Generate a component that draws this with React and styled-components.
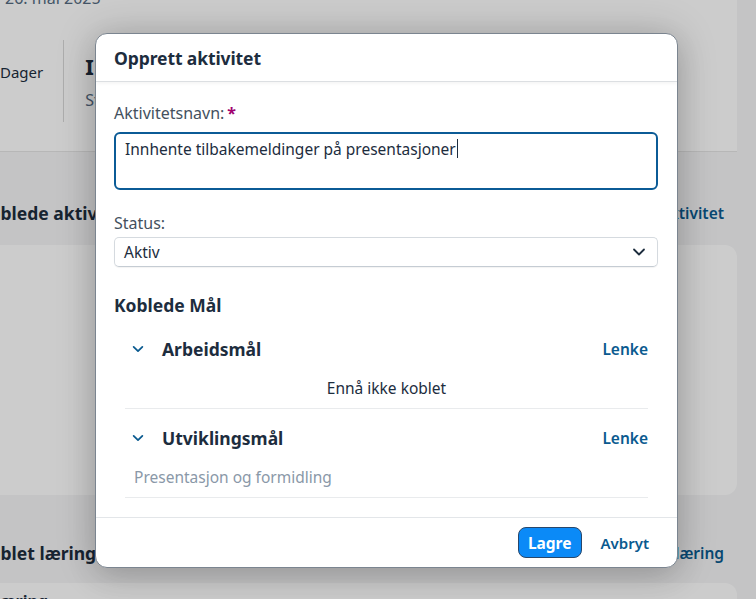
import React from "react";
import styled, { createGlobalStyle } from "styled-components";

const GlobalStyle = createGlobalStyle`
  html, body { margin: 0; padding: 0; }
  body {
    font-family: "Noto Sans", "Open Sans", Arial, sans-serif;
    background: #f5f6f7;
    overflow: hidden;
  }
  * { box-sizing: border-box; }
`;

const Viewport = styled.div`
  position: relative;
  width: 756px;
  height: 599px;
  overflow: hidden;
  background: #f5f6f7;
`;

const Page = styled.div`
  margin-left: -22px;
  width: 759px;
`;

const ObjectHeader = styled.header`
  display: flow-root;
  background: #ffffff;
  height: 152px;
  margin-left: -30px;
  padding: 0 0 0 52px;
  border-bottom: 1px solid #e5e5e5;
`;

const DateLine = styled.div`
  font-size: 16px;
  color: #556b81;
  line-height: 20px;
  margin-top: -12px;
  padding-left: 5px;
`;

const KpiRow = styled.div`
  display: flex;
  align-items: flex-start;
  margin-top: 32px;
`;

const KpiBlock = styled.div`
  display: flex;
  flex-direction: column;
  padding-top: ${(p) => p.$pt || 0}px;
`;

const KpiLabel = styled.span`
  font-size: 15px;
  line-height: 20px;
  color: #1d2d3e;
`;

const KpiValue = styled.span`
  font-size: 22px;
  font-weight: 700;
  color: #1d2d3e;
  line-height: 28px;
`;

const KpiSub = styled.span`
  font-size: 16px;
  line-height: 20px;
  color: #556b81;
  margin-top: 10px;
`;

const VSep = styled.div`
  width: 1px;
  height: 82px;
  background: #d9d9d9;
  margin: 0 21px 0 20px;
`;

const SectionHead = styled.div`
  display: flex;
  justify-content: space-between;
  align-items: center;
  height: 30px;
  margin-top: ${(p) => p.$mt}px;
  padding-right: 13px;
`;

const SectionTitle = styled.h3`
  margin: 0;
  font-size: 17.5px;
  font-weight: 700;
  color: #1d2d3e;
`;

const SectionLink = styled.a`
  font-size: 15.5px;
  font-weight: 600;
  color: #0a5a8f;
`;

const Card = styled.div`
  background: #ffffff;
  border-radius: 12px;
  height: ${(p) => p.$h}px;
  margin-top: ${(p) => p.$mt}px;
  padding: 7px 0 0 14px;
  font-size: 16px;
  font-weight: 700;
  color: #1d2d3e;
`;

const Blocker = styled.div`
  position: absolute;
  inset: 0;
  background: rgba(0, 0, 0, 0.2);
`;

const Dialog = styled.div`
  position: absolute;
  left: 95px;
  top: 33px;
  width: 583px;
  height: 535px;
  background: #ffffff;
  border: 1px solid #7b8590;
  border-radius: 12px;
  box-shadow: 0 0 40px rgba(0, 0, 0, 0.18), 0 10px 30px rgba(0, 0, 0, 0.12);
  display: flex;
  flex-direction: column;
  overflow: hidden;
`;

const DialogHeader = styled.div`
  height: 48px;
  flex: 0 0 48px;
  display: flex;
  align-items: center;
  padding: 0 18px;
  border-bottom: 1px solid #dcdfe2;
  box-shadow: 0 2px 3px rgba(0, 0, 0, 0.04);
`;

const DialogTitle = styled.h2`
  margin: 0;
  font-size: 17.5px;
  font-weight: 700;
  color: #1d2d3e;
  letter-spacing: -0.1px;
`;

const DialogBody = styled.div`
  flex: 1;
  padding: 20px 19px 0 18px;
`;

const Label = styled.label`
  display: block;
  font-size: 16px;
  color: #44515e;
  line-height: 22px;
  margin-top: ${(p) => p.$mt || 0}px;
`;

const Required = styled.span`
  color: #a1006f;
  font-weight: 700;
  margin-left: 3px;
`;

const TextArea = styled.div`
  margin-top: 8px;
  height: 58px;
  border: 2px solid #0b5b96;
  border-radius: 6px;
  padding: 3px 9px;
  font-size: 15.5px;
  line-height: 24px;
  color: #1d2d3e;
`;

const Caret = styled.span`
  display: inline-block;
  width: 1px;
  height: 19px;
  background: #1d2d3e;
  vertical-align: -3px;
  margin-left: 1px;
`;

const Select = styled.div`
  margin-top: 3px;
  height: 30px;
  border: 1px solid #d5dadf;
  border-bottom-color: #c5ccd3;
  border-radius: 5px;
  display: flex;
  align-items: center;
  justify-content: space-between;
  padding: 0 10px 0 9px;
  font-size: 15.5px;
  color: #1d2d3e;
  box-shadow: 0 1px 1px rgba(0, 0, 0, 0.05);
`;

const GroupTitle = styled.h3`
  margin: 25px 0 0 0;
  font-size: 17.5px;
  font-weight: 700;
  color: #1d2d3e;
  line-height: 26px;
`;

const Panel = styled.div`
  margin: ${(p) => p.$mt}px 10px 0 11px;
  border-bottom: 1px solid #e9ebed;
`;

const PanelHead = styled.div`
  display: flex;
  align-items: center;
  height: 30px;
  padding-left: 6px;
`;

const PanelTitle = styled.span`
  flex: 1;
  font-size: 17.5px;
  font-weight: 700;
  color: #1d2d3e;
  margin-left: 17px;
`;

const LinkText = styled.a`
  font-size: 15.5px;
  font-weight: 600;
  color: #0a5a8f;
`;

const PanelBody = styled.div`
  height: 44px;
  padding-top: 13px;
  line-height: 22px;
  text-align: ${(p) => (p.$center ? "center" : "left")};
  padding-left: ${(p) => (p.$center ? 0 : 9)}px;
  font-size: 15.5px;
  color: ${(p) => (p.$muted ? "#8a98a8" : "#1d2d3e")};
`;

const DialogFooter = styled.div`
  height: 50px;
  flex: 0 0 50px;
  border-top: 1px solid #e3e6e9;
  display: flex;
  align-items: center;
  justify-content: flex-end;
  gap: 9px;
  padding-right: 18px;
`;

const PrimaryButton = styled.button`
  height: 31px;
  padding: 0 9px;
  border-radius: 8px;
  border: 1px solid #28476b;
  background: #0b8af7;
  color: #ffffff;
  font-family: inherit;
  font-size: 15.5px;
  font-weight: 700;
`;

const GhostButton = styled.button`
  height: 31px;
  padding: 0 10px;
  border: none;
  background: transparent;
  color: #0a5a8f;
  font-family: inherit;
  font-size: 15px;
  font-weight: 600;
`;

const Chevron = ({ color = "#0a5a8f", size = 14, sw = 2 }) => (
  <svg width={size} height={size} viewBox="0 0 16 16" fill="none">
    <path d="M3 5.5 L8 10.5 L13 5.5" stroke={color} strokeWidth={sw} strokeLinecap="round" strokeLinejoin="round" />
  </svg>
);

export default function App() {
  return (
    <>
      <GlobalStyle />
      <Viewport>
        <Page>
          <ObjectHeader>
            <DateLine>26. mai 2025</DateLine>
            <KpiRow>
              <KpiBlock $pt={22}>
                <KpiLabel>Dager</KpiLabel>
              </KpiBlock>
              <VSep />
              <KpiBlock $pt={12}>
                <KpiValue>I gang</KpiValue>
                <KpiSub>Status</KpiSub>
              </KpiBlock>
            </KpiRow>
          </ObjectHeader>
          <section>
            <SectionHead $mt={46}>
              <SectionTitle>Koblede aktiviteter</SectionTitle>
              <SectionLink>Legg til aktivitet</SectionLink>
            </SectionHead>
            <Card $h={250} $mt={17} />
          </section>
          <section>
            <SectionHead $mt={43}>
              <SectionTitle>Koblet læring</SectionTitle>
              <SectionLink>Legg til læring</SectionLink>
            </SectionHead>
            <Card $h={80} $mt={15}>Læring</Card>
          </section>
        </Page>
        <Blocker />
        <Dialog role="dialog">
          <DialogHeader>
            <DialogTitle>Opprett aktivitet</DialogTitle>
          </DialogHeader>
          <DialogBody>
            <Label>
              Aktivitetsnavn:<Required>*</Required>
            </Label>
            <TextArea>
              Innhente tilbakemeldinger på presentasjoner
              <Caret />
            </TextArea>
            <Label $mt={22}>Status:</Label>
            <Select>
              <span>Aktiv</span>
              <Chevron color="#1d2d3e" size={16} sw={1.8} />
            </Select>
            <GroupTitle>Koblede Mål</GroupTitle>
            <Panel $mt={16}>
              <PanelHead>
                <Chevron />
                <PanelTitle>Arbeidsmål</PanelTitle>
                <LinkText>Lenke</LinkText>
              </PanelHead>
              <PanelBody $center>Ennå ikke koblet</PanelBody>
            </Panel>
            <Panel $mt={14}>
              <PanelHead>
                <Chevron />
                <PanelTitle>Utviklingsmål</PanelTitle>
                <LinkText>Lenke</LinkText>
              </PanelHead>
              <PanelBody $muted>Presentasjon og formidling</PanelBody>
            </Panel>
          </DialogBody>
          <DialogFooter>
            <PrimaryButton>Lagre</PrimaryButton>
            <GhostButton>Avbryt</GhostButton>
          </DialogFooter>
        </Dialog>
      </Viewport>
    </>
  );
}
